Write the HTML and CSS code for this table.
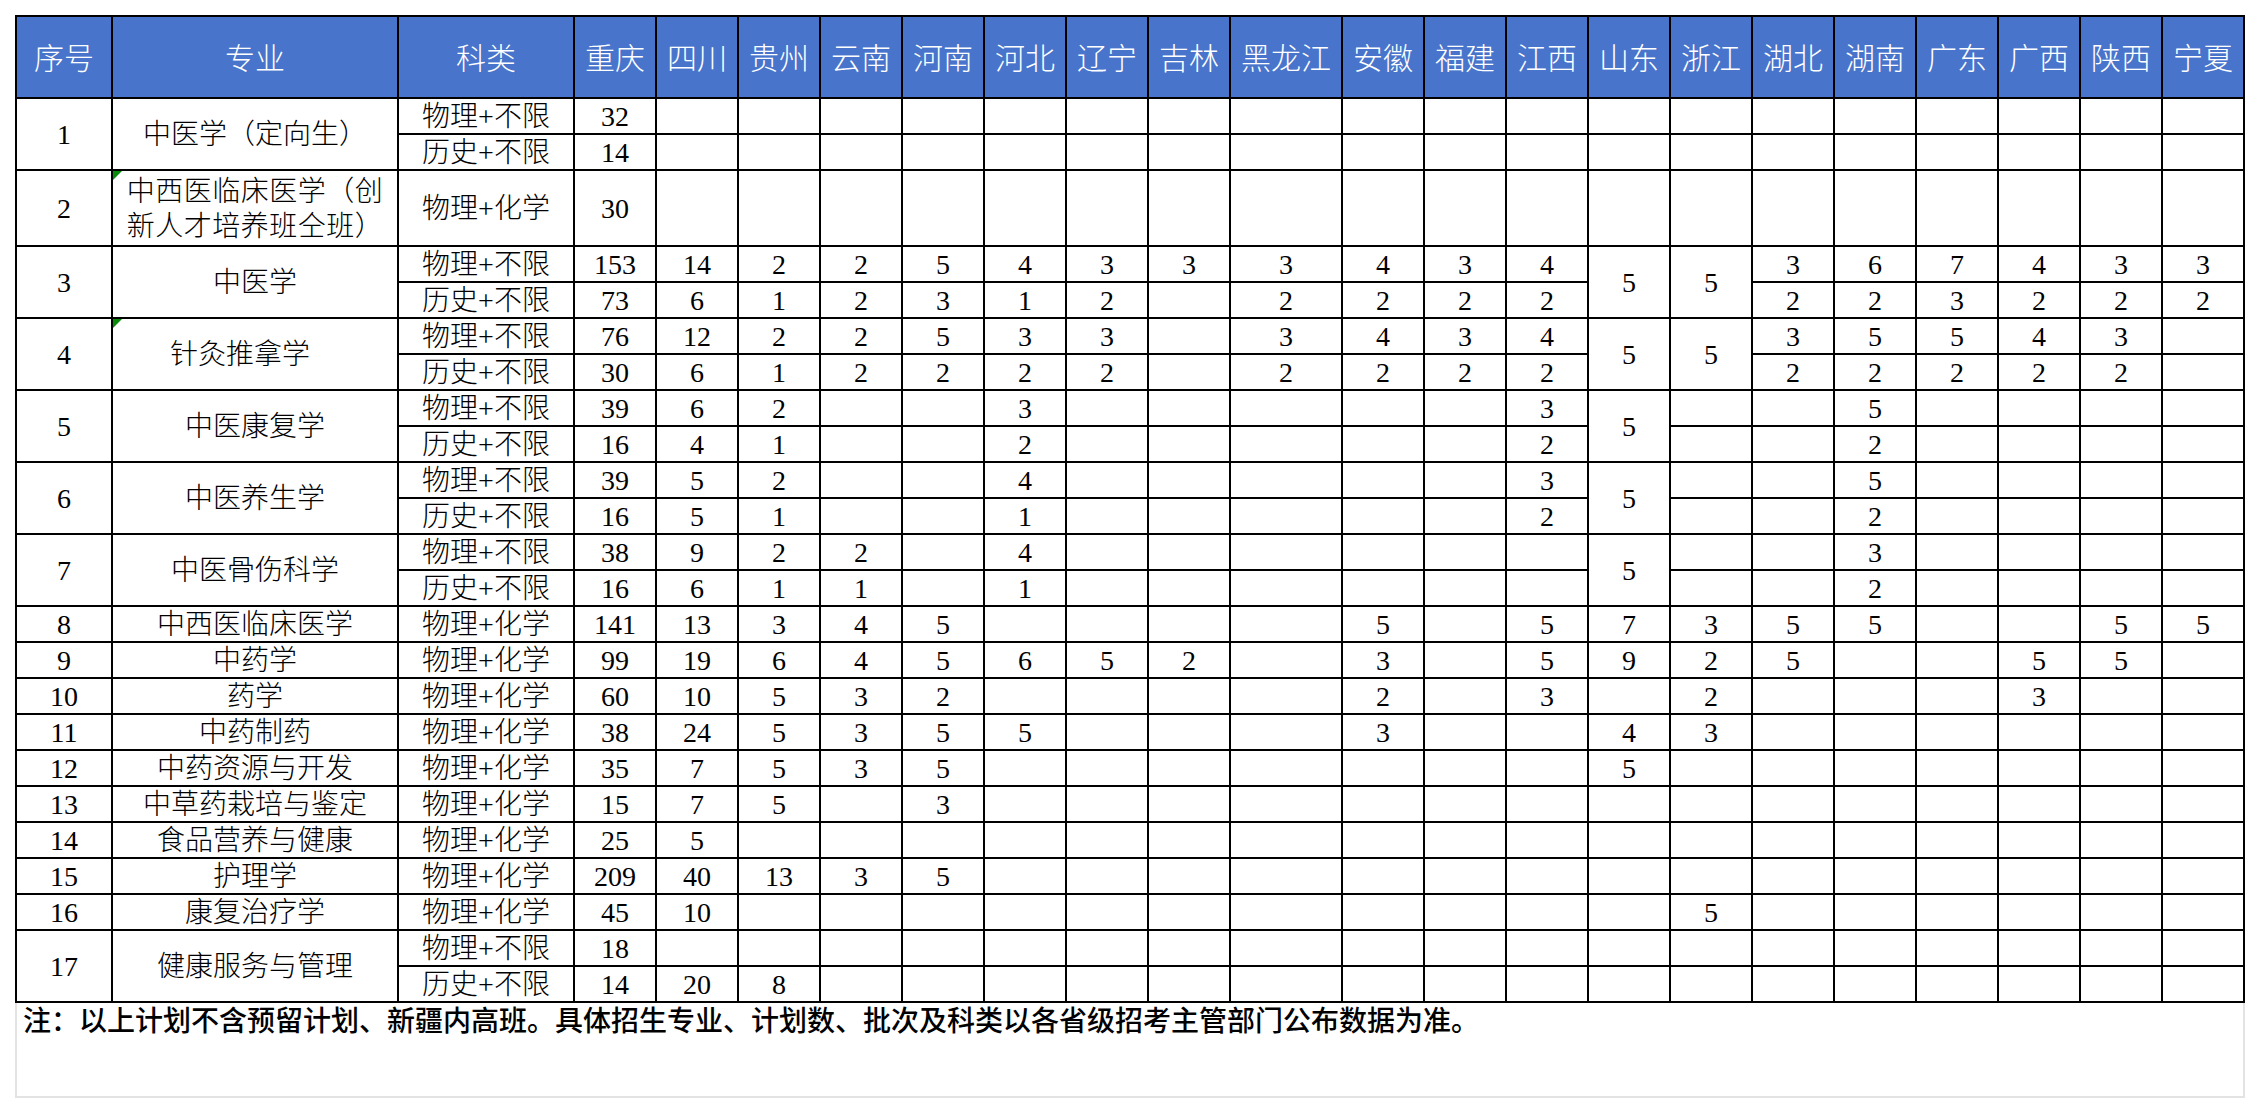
FILE: index.html
```html
<!DOCTYPE html>
<html lang="zh-CN">
<head>
<meta charset="utf-8">
<title>招生计划</title>
<link rel="stylesheet" href="styles.css">
</head>
<body>
<div class="sheet">
<table class="grid">
<colgroup>
<col class="c-idx"><col class="c-major"><col class="c-cat">
<col class="c-p"><col class="c-p"><col class="c-p"><col class="c-p"><col class="c-p"><col class="c-p"><col class="c-p"><col class="c-p">
<col class="c-wide">
<col class="c-p"><col class="c-p"><col class="c-p"><col class="c-p"><col class="c-p"><col class="c-p"><col class="c-p"><col class="c-p"><col class="c-p"><col class="c-p"><col class="c-p">
</colgroup>
<thead>
<tr class="head">
<th>序号</th><th>专业</th><th>科类</th><th>重庆</th><th>四川</th><th>贵州</th><th>云南</th><th>河南</th><th>河北</th><th>辽宁</th><th>吉林</th><th>黑龙江</th><th>安徽</th><th>福建</th><th>江西</th><th>山东</th><th>浙江</th><th>湖北</th><th>湖南</th><th>广东</th><th>广西</th><th>陕西</th><th>宁夏</th>
</tr>
</thead>
<tbody>
<tr><td rowspan="2">1</td><td rowspan="2">中医学（定向生）</td><td>物理+不限</td><td>32</td><td></td><td></td><td></td><td></td><td></td><td></td><td></td><td></td><td></td><td></td><td></td><td></td><td></td><td></td><td></td><td></td><td></td><td></td><td></td></tr>
<tr><td>历史+不限</td><td>14</td><td></td><td></td><td></td><td></td><td></td><td></td><td></td><td></td><td></td><td></td><td></td><td></td><td></td><td></td><td></td><td></td><td></td><td></td><td></td></tr>
<tr class="tall"><td>2</td><td class="flagged wrap"><span class="flag"></span>中西医临床医学（创<br>新人才培养班仝班）</td><td>物理+化学</td><td>30</td><td></td><td></td><td></td><td></td><td></td><td></td><td></td><td></td><td></td><td></td><td></td><td></td><td></td><td></td><td></td><td></td><td></td><td></td><td></td></tr>
<tr><td rowspan="2">3</td><td rowspan="2">中医学</td><td>物理+不限</td><td>153</td><td>14</td><td>2</td><td>2</td><td>5</td><td>4</td><td>3</td><td>3</td><td>3</td><td>4</td><td>3</td><td>4</td><td rowspan="2">5</td><td rowspan="2">5</td><td>3</td><td>6</td><td>7</td><td>4</td><td>3</td><td>3</td></tr>
<tr><td>历史+不限</td><td>73</td><td>6</td><td>1</td><td>2</td><td>3</td><td>1</td><td>2</td><td></td><td>2</td><td>2</td><td>2</td><td>2</td><td>2</td><td>2</td><td>3</td><td>2</td><td>2</td><td>2</td></tr>
<tr><td rowspan="2">4</td><td rowspan="2" class="flagged shifted"><span class="flag"></span>针灸推拿学</td><td>物理+不限</td><td>76</td><td>12</td><td>2</td><td>2</td><td>5</td><td>3</td><td>3</td><td></td><td>3</td><td>4</td><td>3</td><td>4</td><td rowspan="2">5</td><td rowspan="2">5</td><td>3</td><td>5</td><td>5</td><td>4</td><td>3</td><td></td></tr>
<tr><td>历史+不限</td><td>30</td><td>6</td><td>1</td><td>2</td><td>2</td><td>2</td><td>2</td><td></td><td>2</td><td>2</td><td>2</td><td>2</td><td>2</td><td>2</td><td>2</td><td>2</td><td>2</td><td></td></tr>
<tr><td rowspan="2">5</td><td rowspan="2">中医康复学</td><td>物理+不限</td><td>39</td><td>6</td><td>2</td><td></td><td></td><td>3</td><td></td><td></td><td></td><td></td><td></td><td>3</td><td rowspan="2">5</td><td></td><td></td><td>5</td><td></td><td></td><td></td><td></td></tr>
<tr><td>历史+不限</td><td>16</td><td>4</td><td>1</td><td></td><td></td><td>2</td><td></td><td></td><td></td><td></td><td></td><td>2</td><td></td><td></td><td>2</td><td></td><td></td><td></td><td></td></tr>
<tr><td rowspan="2">6</td><td rowspan="2">中医养生学</td><td>物理+不限</td><td>39</td><td>5</td><td>2</td><td></td><td></td><td>4</td><td></td><td></td><td></td><td></td><td></td><td>3</td><td rowspan="2">5</td><td></td><td></td><td>5</td><td></td><td></td><td></td><td></td></tr>
<tr><td>历史+不限</td><td>16</td><td>5</td><td>1</td><td></td><td></td><td>1</td><td></td><td></td><td></td><td></td><td></td><td>2</td><td></td><td></td><td>2</td><td></td><td></td><td></td><td></td></tr>
<tr><td rowspan="2">7</td><td rowspan="2">中医骨伤科学</td><td>物理+不限</td><td>38</td><td>9</td><td>2</td><td>2</td><td></td><td>4</td><td></td><td></td><td></td><td></td><td></td><td></td><td rowspan="2">5</td><td></td><td></td><td>3</td><td></td><td></td><td></td><td></td></tr>
<tr><td>历史+不限</td><td>16</td><td>6</td><td>1</td><td>1</td><td></td><td>1</td><td></td><td></td><td></td><td></td><td></td><td></td><td></td><td></td><td>2</td><td></td><td></td><td></td><td></td></tr>
<tr><td>8</td><td>中西医临床医学</td><td>物理+化学</td><td>141</td><td>13</td><td>3</td><td>4</td><td>5</td><td></td><td></td><td></td><td></td><td>5</td><td></td><td>5</td><td>7</td><td>3</td><td>5</td><td>5</td><td></td><td></td><td>5</td><td>5</td></tr>
<tr><td>9</td><td>中药学</td><td>物理+化学</td><td>99</td><td>19</td><td>6</td><td>4</td><td>5</td><td>6</td><td>5</td><td>2</td><td></td><td>3</td><td></td><td>5</td><td>9</td><td>2</td><td>5</td><td></td><td></td><td>5</td><td>5</td><td></td></tr>
<tr><td>10</td><td>药学</td><td>物理+化学</td><td>60</td><td>10</td><td>5</td><td>3</td><td>2</td><td></td><td></td><td></td><td></td><td>2</td><td></td><td>3</td><td></td><td>2</td><td></td><td></td><td></td><td>3</td><td></td><td></td></tr>
<tr><td>11</td><td>中药制药</td><td>物理+化学</td><td>38</td><td>24</td><td>5</td><td>3</td><td>5</td><td>5</td><td></td><td></td><td></td><td>3</td><td></td><td></td><td>4</td><td>3</td><td></td><td></td><td></td><td></td><td></td><td></td></tr>
<tr><td>12</td><td>中药资源与开发</td><td>物理+化学</td><td>35</td><td>7</td><td>5</td><td>3</td><td>5</td><td></td><td></td><td></td><td></td><td></td><td></td><td></td><td>5</td><td></td><td></td><td></td><td></td><td></td><td></td><td></td></tr>
<tr><td>13</td><td>中草药栽培与鉴定</td><td>物理+化学</td><td>15</td><td>7</td><td>5</td><td></td><td>3</td><td></td><td></td><td></td><td></td><td></td><td></td><td></td><td></td><td></td><td></td><td></td><td></td><td></td><td></td><td></td></tr>
<tr><td>14</td><td>食品营养与健康</td><td>物理+化学</td><td>25</td><td>5</td><td></td><td></td><td></td><td></td><td></td><td></td><td></td><td></td><td></td><td></td><td></td><td></td><td></td><td></td><td></td><td></td><td></td><td></td></tr>
<tr><td>15</td><td>护理学</td><td>物理+化学</td><td>209</td><td>40</td><td>13</td><td>3</td><td>5</td><td></td><td></td><td></td><td></td><td></td><td></td><td></td><td></td><td></td><td></td><td></td><td></td><td></td><td></td><td></td></tr>
<tr><td>16</td><td>康复治疗学</td><td>物理+化学</td><td>45</td><td>10</td><td></td><td></td><td></td><td></td><td></td><td></td><td></td><td></td><td></td><td></td><td></td><td>5</td><td></td><td></td><td></td><td></td><td></td><td></td></tr>
<tr><td rowspan="2">17</td><td rowspan="2">健康服务与管理</td><td>物理+不限</td><td>18</td><td></td><td></td><td></td><td></td><td></td><td></td><td></td><td></td><td></td><td></td><td></td><td></td><td></td><td></td><td></td><td></td><td></td><td></td><td></td></tr>
<tr><td>历史+不限</td><td>14</td><td>20</td><td>8</td><td></td><td></td><td></td><td></td><td></td><td></td><td></td><td></td><td></td><td></td><td></td><td></td><td></td><td></td><td></td><td></td><td></td></tr>
</tbody>
</table>
<div class="note">注：以上计划不含预留计划、新疆内高班。具体招生专业、计划数、批次及科类以各省级招考主管部门公布数据为准。</div>
</div>
</body>
</html>
```
FILE: styles.css
```css
html, body {
  margin: 0;
  background: #ffffff;
}

body {
  font-family: "Liberation Serif", "Noto Sans CJK SC", serif;
  color: #000000;
}

.sheet {
  padding: 15px 0 0 15px;
  width: 2232px;
}

.grid {
  border-collapse: collapse;
  table-layout: fixed;
  width: 2230px;
}

.c-idx { width: 96px; }
.c-major { width: 286px; }
.c-cat { width: 176px; }
.c-p { width: 82px; }
.c-wide { width: 112px; }

.grid th,
.grid td {
  border: 2px solid #000000;
  padding: 0;
  text-align: center;
  vertical-align: middle;
  font-size: 28px;
  line-height: 30px;
  font-weight: 300;
  white-space: nowrap;
  overflow: hidden;
}

.grid tr {
  height: 36px;
}

.grid tr.head {
  height: 82px;
}

.grid tr.tall {
  height: 76px;
}

.grid th {
  background: #4874cb;
  color: #ffffff;
  font-size: 30px;
  line-height: 32px;
  padding-top: 4px;
}

.grid td {
  padding-top: 2px;
}

.grid td.wrap {
  line-height: 35px;
  padding-top: 2px;
  letter-spacing: 0.5px;
}

.grid td.shifted {
  padding-right: 30px;
}

.flagged {
  position: relative;
}

.flag {
  position: absolute;
  top: 0;
  left: 0;
  width: 0;
  height: 0;
  border-top: 9px solid #0a8a0a;
  border-right: 9px solid transparent;
}

.note {
  width: 2226px;
  height: 91px;
  border: 2px solid #e3e3e3;
  border-top: none;
  padding-top: 2px;
  font-size: 28px;
  font-weight: 500;
  line-height: 34px;
  text-indent: 6px;
}
```
